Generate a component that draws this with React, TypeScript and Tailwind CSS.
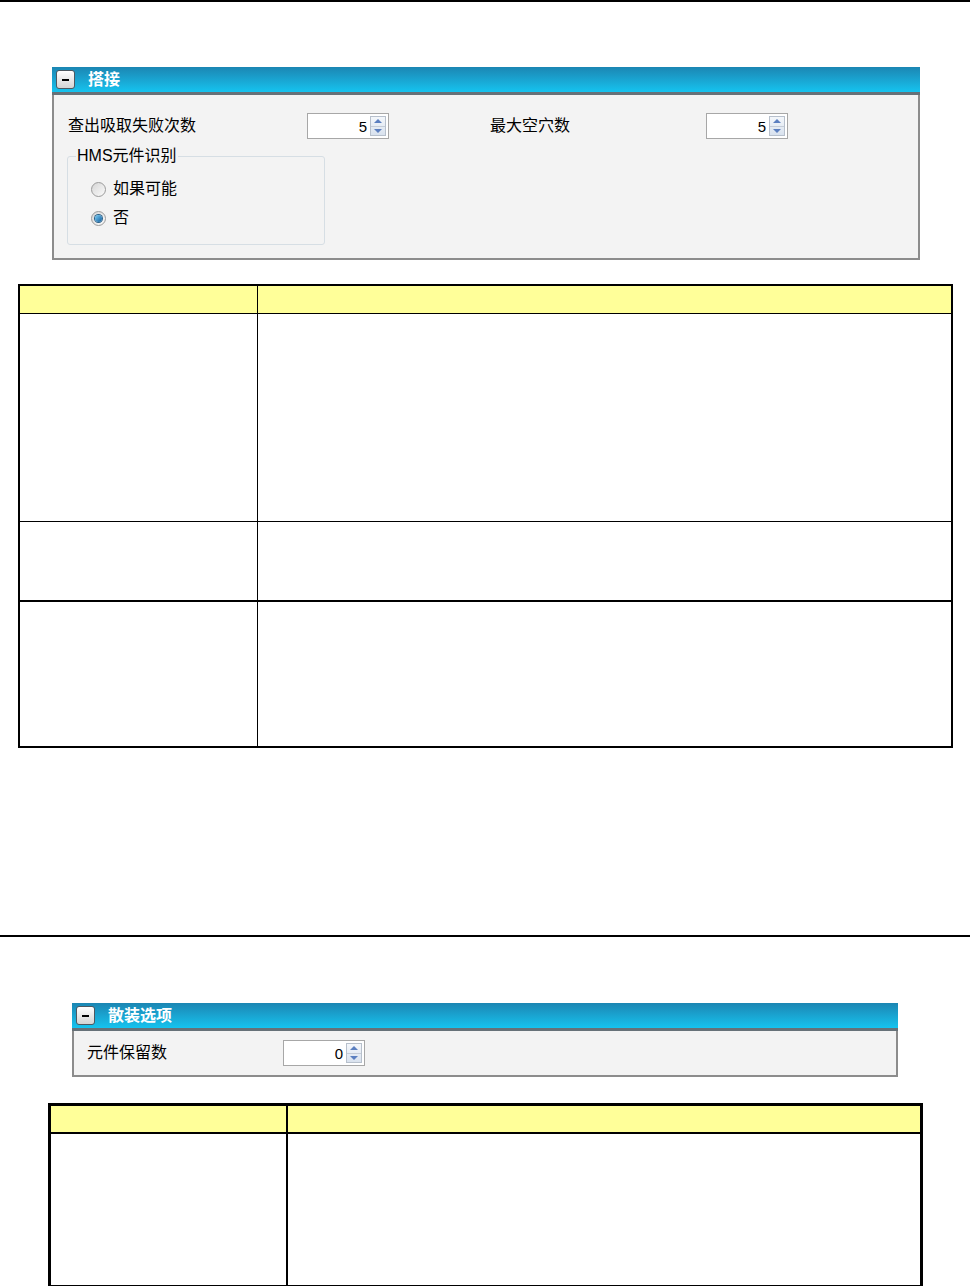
import React from 'react';

const font = "font-['Liberation_Sans','Noto_Sans_CJK_SC',sans-serif]";

const Spinner: React.FC<{ value: string }> = ({ value }) => (
  <div className="flex h-[26px] w-[82px] items-center border border-[#a7a7a7] bg-white pr-[2px]">
    <span className="flex-1 pr-[3px] text-right text-[15px] leading-none text-black">{value}</span>
    <div className="flex h-[20px] w-[16px] flex-col border border-[#b7c0cc] bg-gradient-to-b from-[#f4f7fb] to-[#d9e2ee]">
      <div className="flex flex-1 items-center justify-center">
        <div className="h-0 w-0 border-x-[4px] border-b-[4px] border-x-transparent border-b-[#5b7fc0]" />
      </div>
      <div className="h-px bg-[#c4ccd8]" />
      <div className="flex flex-1 items-center justify-center">
        <div className="h-0 w-0 border-x-[4px] border-t-[4px] border-x-transparent border-t-[#5b7fc0]" />
      </div>
    </div>
  </div>
);

const Radio: React.FC<{ checked?: boolean; label: string }> = ({ checked, label }) => (
  <div className="flex items-center gap-[7px]">
    <div className="flex h-[15px] w-[15px] items-center justify-center rounded-full border border-[#9a9a9a] bg-gradient-to-br from-[#d6d6d6] to-[#fbfbfb]">
      {checked && <div className="h-[7px] w-[7px] rounded-full bg-gradient-to-br from-[#7ad0f7] to-[#0a5c9c] ring-1 ring-[#2a5f86]" />}
    </div>
    <span className="text-[16px] leading-none text-black">{label}</span>
  </div>
);

const TitleBar: React.FC<{ title: string }> = ({ title }) => (
  <div className="flex h-[28px] items-center gap-[13px] border-b-[3px] border-[#667178] bg-gradient-to-b from-[#1b86b3] to-[#15c3ef] pl-[4px]">
    <div className="flex h-[19px] w-[19px] items-center justify-center rounded-[3px] border border-[#4d5861] bg-gradient-to-b from-white to-[#d4d4d4]">
      <div className="h-[2px] w-[7px] bg-black" />
    </div>
    <span className="text-[16px] font-bold leading-none text-white">{title}</span>
  </div>
);

export default function App() {
  return (
    <div className={`${font} relative h-[1286px] w-[970px] overflow-hidden bg-white`}>
      <div className="h-[2px] bg-black" />

      {/* 搭接 panel */}
      <div className="ml-[52px] mt-[65px] w-[868px]">
        <TitleBar title="搭接" />
        <div className="h-[165px] border-x-2 border-b-2 border-[#8c8c8c] bg-[#f3f3f3] pl-[14px] pt-[18px]">
          <div className="flex items-center">
            <span className="w-[239px] text-[16px] leading-none text-black">查出吸取失败次数</span>
            <Spinner value="5" />
            <span className="ml-[101px] w-[216px] text-[16px] leading-none text-black">最大空穴数</span>
            <Spinner value="5" />
          </div>
          <fieldset className="mt-[9px] ml-[-1px] h-[97px] w-[258px] rounded-[3px] border border-[#d6dee4] pl-[23px]">
            <legend className="ml-[-15px] px-[1px] text-[16px] leading-none text-black">HMS元件识别</legend>
            <div className="mt-[17px] flex flex-col gap-[13px]">
              <Radio label="如果可能" />
              <Radio checked label="否" />
            </div>
          </fieldset>
        </div>
      </div>

      {/* table 1 */}
      <table className="ml-[18px] mt-[24px] w-[935px] border-collapse border-2 border-black">
        <tbody>
          <tr className="h-[28px] bg-[#ffff99]">
            <td className="w-[238px] border-r border-b border-black" />
            <td className="border-b border-black" />
          </tr>
          <tr className="h-[208px]">
            <td className="border-r border-b border-black" />
            <td className="border-b border-black" />
          </tr>
          <tr className="h-[80px]">
            <td className="border-r border-b-2 border-black" />
            <td className="border-b-2 border-black" />
          </tr>
          <tr className="h-[146px]">
            <td className="border-r border-black" />
            <td />
          </tr>
        </tbody>
      </table>

      <div className="mt-[187px] h-[2px] bg-black" />

      {/* 散装选项 panel */}
      <div className="ml-[72px] mt-[66px] w-[826px]">
        <TitleBar title="散装选项" />
        <div className="flex h-[46px] items-center border-x-2 border-b-2 border-[#8c8c8c] bg-[#f3f3f3] pl-[13px]">
          <span className="w-[196px] text-[16px] leading-none text-black">元件保留数</span>
          <Spinner value="0" />
        </div>
      </div>

      {/* table 2 */}
      <table className="ml-[48px] mt-[26px] w-[875px] border-collapse border-[3px] border-black">
        <tbody>
          <tr className="h-[28px] bg-[#ffff99]">
            <td className="w-[237px] border-r-2 border-b-2 border-black" />
            <td className="border-b-2 border-black" />
          </tr>
          <tr className="h-[154px]">
            <td className="border-r-2 border-black" />
            <td />
          </tr>
        </tbody>
      </table>
    </div>
  );
}
